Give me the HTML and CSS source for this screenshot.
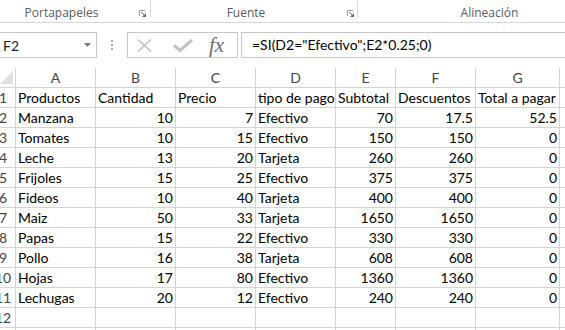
FILE: index.html
```html
<!DOCTYPE html>
<html lang="es">
<head>
    <meta charset="UTF-8">
    <meta name="viewport" content="width=device-width, initial-scale=1.0">
    <title>Libro1 - Excel</title>
    <link rel="stylesheet" href="styles.css">
</head>
<body>
    <!-- nombres de grupos de la cinta -->
    <div class="ribbon">
        <span class="group-label g1">Portapapeles</span>
        <svg class="launcher l1" width="8" height="7" viewBox="0 0 8 7"><path d="M0.5 6V0.5H6" fill="none" stroke="#9a9a9a"/><path d="M2 2L6 6" stroke="#6f6f6f"/><path d="M7 3V7H3Z" fill="#6f6f6f"/></svg>
        <span class="sep s1"></span>
        <span class="group-label g2">Fuente</span>
        <svg class="launcher l2" width="8" height="7" viewBox="0 0 8 7"><path d="M0.5 6V0.5H6" fill="none" stroke="#9a9a9a"/><path d="M2 2L6 6" stroke="#6f6f6f"/><path d="M7 3V7H3Z" fill="#6f6f6f"/></svg>
        <span class="sep s2"></span>
        <span class="group-label g3">Alineación</span>
    </div>

    <!-- barra de fórmulas -->
    <div class="formula-bar">
        <div class="name-box">
            <span>F2</span>
            <svg width="7" height="4" viewBox="0 0 7 4"><path d="M0 0H7L3.5 4Z" fill="#7a7a7a"/></svg>
        </div>
        <div class="dots"><i></i><i></i><i></i></div>
        <div class="fx-buttons">
            <svg class="ico-x" width="15" height="13" viewBox="0 0 15 13"><path d="M1 0.5L14 12.5M14 0.5L1 12.5" stroke="#c2c2c2" stroke-width="1.6"/></svg>
            <svg class="ico-ok" width="20" height="13" viewBox="0 0 20 13"><path d="M1 6.5L7 11.5L19 1" fill="none" stroke="#c2c2c2" stroke-width="3"/></svg>
            <span class="fx">fx</span>
        </div>
        <div class="formula">=SI(D2="Efectivo";E2*0.25;0)</div>
    </div>

    <!-- hoja -->
    <div class="sheet">
        <div class="cell corner"><svg width="13" height="13" viewBox="0 0 13 13"><path d="M13 0V13H0Z" fill="#dfdfdf"/></svg></div>
        <div class="cell col-head">A</div><div class="cell col-head">B</div><div class="cell col-head">C</div><div class="cell col-head">D</div><div class="cell col-head">E</div><div class="cell col-head">F</div><div class="cell col-head">G</div><div class="cell col-head"></div>

        <div class="cell row-head">1</div><div class="cell">Productos</div><div class="cell">Cantidad</div><div class="cell">Precio</div><div class="cell">tipo de pago</div><div class="cell">Subtotal</div><div class="cell">Descuentos</div><div class="cell">Total a pagar</div><div class="cell"></div>
        <div class="cell row-head">2</div><div class="cell">Manzana</div><div class="cell num">10</div><div class="cell num">7</div><div class="cell">Efectivo</div><div class="cell num">70</div><div class="cell num">17.5</div><div class="cell num">52.5</div><div class="cell"></div>
        <div class="cell row-head">3</div><div class="cell">Tomates</div><div class="cell num">10</div><div class="cell num">15</div><div class="cell">Efectivo</div><div class="cell num">150</div><div class="cell num">150</div><div class="cell num">0</div><div class="cell"></div>
        <div class="cell row-head">4</div><div class="cell">Leche</div><div class="cell num">13</div><div class="cell num">20</div><div class="cell">Tarjeta</div><div class="cell num">260</div><div class="cell num">260</div><div class="cell num">0</div><div class="cell"></div>
        <div class="cell row-head">5</div><div class="cell">Frijoles</div><div class="cell num">15</div><div class="cell num">25</div><div class="cell">Efectivo</div><div class="cell num">375</div><div class="cell num">375</div><div class="cell num">0</div><div class="cell"></div>
        <div class="cell row-head">6</div><div class="cell">Fideos</div><div class="cell num">10</div><div class="cell num">40</div><div class="cell">Tarjeta</div><div class="cell num">400</div><div class="cell num">400</div><div class="cell num">0</div><div class="cell"></div>
        <div class="cell row-head">7</div><div class="cell">Maiz</div><div class="cell num">50</div><div class="cell num">33</div><div class="cell">Tarjeta</div><div class="cell num">1650</div><div class="cell num">1650</div><div class="cell num">0</div><div class="cell"></div>
        <div class="cell row-head">8</div><div class="cell">Papas</div><div class="cell num">15</div><div class="cell num">22</div><div class="cell">Efectivo</div><div class="cell num">330</div><div class="cell num">330</div><div class="cell num">0</div><div class="cell"></div>
        <div class="cell row-head">9</div><div class="cell">Pollo</div><div class="cell num">16</div><div class="cell num">38</div><div class="cell">Tarjeta</div><div class="cell num">608</div><div class="cell num">608</div><div class="cell num">0</div><div class="cell"></div>
        <div class="cell row-head">10</div><div class="cell">Hojas</div><div class="cell num">17</div><div class="cell num">80</div><div class="cell">Efectivo</div><div class="cell num">1360</div><div class="cell num">1360</div><div class="cell num">0</div><div class="cell"></div>
        <div class="cell row-head">11</div><div class="cell">Lechugas</div><div class="cell num">20</div><div class="cell num">12</div><div class="cell">Efectivo</div><div class="cell num">240</div><div class="cell num">240</div><div class="cell num">0</div><div class="cell"></div>
        <div class="cell row-head">12</div><div class="cell"></div><div class="cell"></div><div class="cell"></div><div class="cell"></div><div class="cell"></div><div class="cell"></div><div class="cell"></div><div class="cell"></div>
        <div class="cell row-head">13</div><div class="cell"></div><div class="cell"></div><div class="cell"></div><div class="cell"></div><div class="cell"></div><div class="cell"></div><div class="cell"></div><div class="cell"></div>
    </div>
</body>
</html>
```

FILE: styles.css
```css
body {
    margin: 0;
    width: 565px;
    height: 330px;
    overflow: hidden;
    background-color: white;
    font-family: Lato, "Liberation Sans", sans-serif;
    color: black;
}

/* cinta */
.ribbon {
    display: flex;
    height: 22px;
    border-bottom: 1px solid #d6d6d6;
    font-family: "Open Sans", sans-serif;
    font-size: 12px;
    color: #5c5c5c;
    overflow: hidden;
}
.group-label {
    flex: none;
    line-height: 14px;
    padding-top: 6px;
    text-align: center;
}
.g1 { width: 123px; }
.g2 { width: 190px; }
.g3 { width: 263px; }
.launcher {
    flex: none;
    margin-top: 10px;
}
.l1 { margin-left: 16px; }
.l2 { margin-left: 6px; }
.sep {
    flex: none;
    width: 1px;
    height: 17px;
    background-color: #dadada;
}
.s1 { margin-left: 3px; }
.s2 { margin-left: 2px; }

/* barra de fórmulas */
.formula-bar {
    display: flex;
    height: 26px;
    padding: 9px 0 10px;
}
.name-box {
    flex: none;
    width: 102px;
    margin-left: -5px;
    box-sizing: border-box;
    border: 1px solid #c6c6c6;
    display: flex;
    align-items: center;
    justify-content: space-between;
    padding: 0 5px 0 7px;
    font-size: 14px;
    color: #222;
}
.dots {
    flex: none;
    margin-left: 14px;
    display: flex;
    flex-direction: column;
    justify-content: center;
    gap: 2px;
}
.dots i {
    width: 2px;
    height: 2px;
    background-color: #a8a8a8;
}
.fx-buttons {
    flex: none;
    width: 111px;
    margin-left: 14px;
    box-sizing: border-box;
    border: 1px solid #c6c6c6;
    display: flex;
    align-items: center;
    padding-left: 9px;
}
.ico-ok { margin-left: 21px; }
.fx {
    margin-left: 16px;
    font-family: "Liberation Serif", serif;
    font-style: italic;
    font-size: 21px;
    color: #6e6e6e;
    line-height: 20px;
}
.formula {
    flex: 1;
    margin: 0 -10px 0 3px;
    border: 1px solid #c6c6c6;
    padding-left: 10px;
    font-size: 14px;
    line-height: 24px;
}

/* hoja */
.sheet {
    margin-left: -9px;
    display: grid;
    grid-template-columns: 25px 80px 80px 80px 80px 60px 80px 84px 80px;
    grid-auto-rows: 20px;
}
.cell {
    box-sizing: border-box;
    border-right: 1px solid #d4d4d4;
    border-bottom: 1px solid #d4d4d4;
    padding: 0 2px;
    font-size: 14px;
    line-height: 19px;
    white-space: nowrap;
    overflow: hidden;
}
.num {
    text-align: right;
}
.col-head, .row-head {
    text-align: center;
    color: #444;
    padding: 0;
}
.corner {
    display: flex;
    justify-content: flex-end;
    align-items: flex-end;
    padding: 0 2px 3px 0;
}
```
